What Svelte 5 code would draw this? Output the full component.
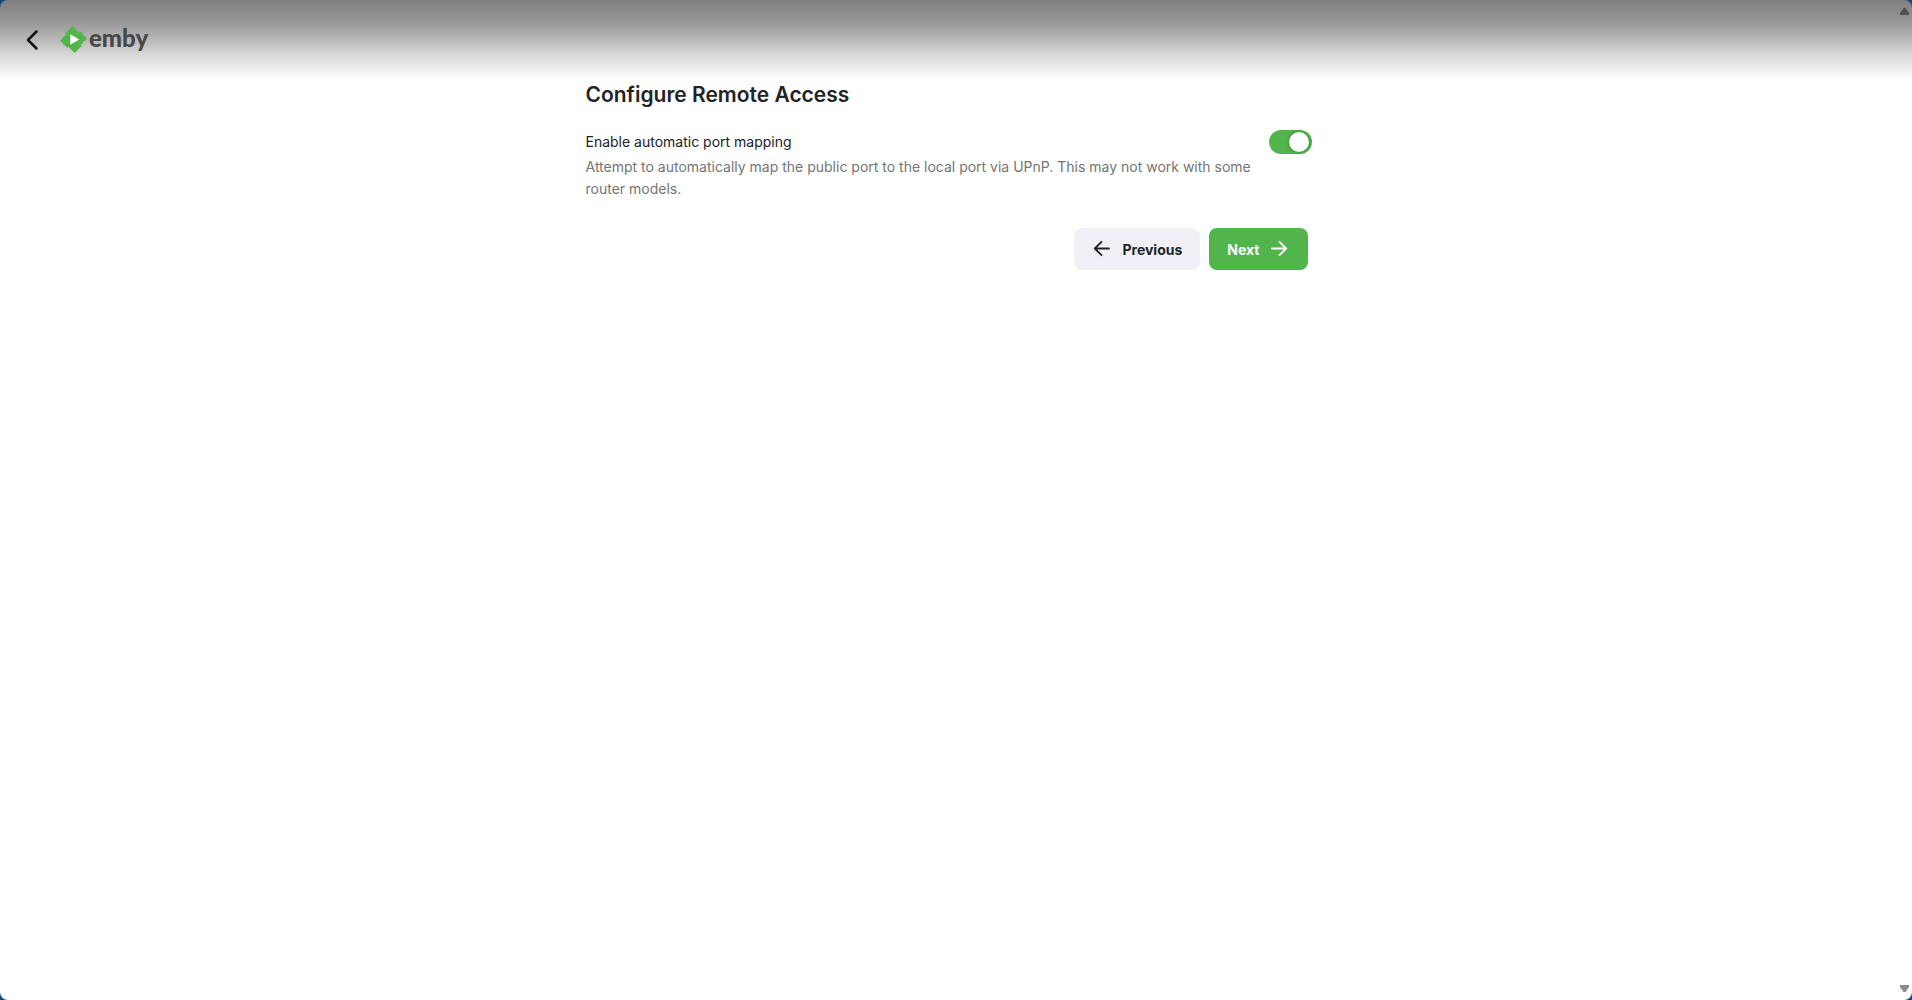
<script>
  let mapping = $state(true);
</script>

<div class="window">
  <header>
    <button class="back" aria-label="Back">
      <svg width="24" height="24" viewBox="0 0 24 24" fill="none" stroke="currentColor" stroke-width="2.5" stroke-linecap="round" stroke-linejoin="round">
        <path d="M16.500 3.500 8 12l8.500 8.500" />
      </svg>
    </button>
    <a class="logo" href="#home">
      <svg width="27" height="27" viewBox="0 0 24 24">
        <path fill="#fff" d="M8 6h10v12H8Z" />
        <path fill="#52b54b" d="M11.041 0c-.007 0-1.456 1.430-3.219 3.176L4.615 6.352l.512.513.512.512-2.819 2.791L0 12.961l1.830 1.848c1.006 1.016 2.438 2.460 3.182 3.209l1.351 1.359.508-.496c.280-.273.515-.498.524-.498.008 0 1.266 1.264 2.794 2.808L12.970 24l.187-.182c.230-.225 5.007-4.950 5.717-5.656l.520-.516-.502-.513c-.276-.282-.500-.520-.496-.530.003-.009 1.264-1.260 2.802-2.783 1.538-1.522 2.800-2.776 2.803-2.785.005-.012-3.617-3.684-6.107-6.193L17.650 4.600l-.505.505c-.279.278-.517.501-.530.497-.013-.005-1.270-1.267-2.793-2.805A449.655 449.655 0 0 0 11.041 0zM9.223 7.367c.091.038 7.951 4.608 7.957 4.627.003.013-1.781 1.056-3.965 2.320a999.898 999.898 0 0 1-3.996 2.307c-.019.006-.026-1.266-.026-4.629 0-3.700.007-4.634.030-4.625Z" />
      </svg>
      <span>emby</span>
    </a>
  </header>

  <main>
    <form>
      <h1>Configure Remote Access</h1>
      <div class="setting">
        <div class="copy">
          <label for="mapping">Enable automatic port mapping</label>
          <p id="mapping-help">Attempt to automatically map the public port to the local port via UPnP. This may not work with some router models.</p>
        </div>
        <input id="mapping" type="checkbox" role="switch" aria-describedby="mapping-help" bind:checked={mapping} />
      </div>
      <div class="actions">
        <button type="button" class="previous">
          <svg width="20" height="20" viewBox="0 0 20 20" fill="none" stroke="currentColor" stroke-width="1.800" stroke-linecap="round" stroke-linejoin="round">
            <path d="M17 9.500H3M9.500 2.800 2.800 9.500l6.700 6.700" />
          </svg>
          Previous
        </button>
        <button type="button" class="next">
          Next
          <svg width="20" height="20" viewBox="0 0 20 20" fill="none" stroke="currentColor" stroke-width="1.800" stroke-linecap="round" stroke-linejoin="round">
            <path d="M2 9.500h14M9.500 2.800 16.200 9.500l-6.700 6.700" />
          </svg>
        </button>
      </div>
    </form>
  </main>

  <div class="scrollbar" aria-hidden="true">
    <svg width="9" height="7" viewBox="0 0 9 7"><path fill="#505050" d="M3.500 0h2L9 5v2H0V5Z" /></svg>
    <svg width="9" height="7" viewBox="0 0 9 7"><path fill="#8b8b8b" d="M0 0h9v2L5.500 7h-2L0 2Z" /></svg>
  </div>
</div>

<style>
  :global(body) {
    margin: 0;
    background: #0f4c81;
  }

  .window {
    position: relative;
    box-sizing: border-box;
    min-height: 100vh;
    padding-right: 15px;
    border-radius: 8px;
    background: linear-gradient(#808080 0, #949494 20px, #b5b5b5 38px, #d6d6d6 54px, #efefef 69px, #fff 80px);
    background-color: #fff;
    font-family: Inter, "Liberation Sans", sans-serif;
    font-size: 14px;
    color: #222326;
  }

  header {
    display: flex;
    align-items: center;
    gap: 16px;
    height: 80px;
    padding-left: 20px;
  }

  button {
    border: 0;
    font: inherit;
    color: inherit;
    cursor: pointer;
  }

  .back {
    display: flex;
    padding: 0;
    background: none;
    color: #111;
  }

  .logo {
    display: flex;
    align-items: center;
    gap: 2px;
    padding-bottom: 2px;
    color: #484848;
    font-family: Lato, sans-serif;
    font-size: 24px;
    font-weight: 900;
    line-height: 26px;
    text-decoration: none;
  }

  .logo span {
    padding-bottom: 2px;
  }

  form {
    box-sizing: border-box;
    width: 100%;
    max-width: 726px;
    margin: 0 auto;
  }

  h1 {
    margin: 0;
    font-size: 21px;
    font-weight: 600;
    line-height: 30px;
  }

  .setting {
    display: flex;
    align-items: flex-start;
    margin-top: 20px;
  }

  .copy {
    flex: 1;
    min-width: 0;
  }

  label {
    display: block;
    line-height: 24px;
  }

  p {
    margin: 2px 0 0;
    line-height: 22px;
    color: #757575;
  }

  input {
    flex: none;
    display: flex;
    align-items: center;
    justify-content: flex-end;
    box-sizing: border-box;
    width: 43px;
    height: 24px;
    margin: 0;
    padding: 0 3px;
    border-radius: 12px;
    background: #52b54b;
    appearance: none;
    cursor: pointer;
  }

  input:not(:checked) {
    justify-content: flex-start;
    background: #bbb;
  }

  input::before {
    content: "";
    width: 20px;
    height: 20px;
    border-radius: 50%;
    background: #fff;
    box-shadow: 0 0 4px rgba(0, 0, 0, 0.3);
  }

  .actions {
    display: flex;
    justify-content: flex-end;
    gap: 9px;
    margin: 28px 4px 0 0;
  }

  .actions button {
    display: flex;
    align-items: center;
    gap: 10px;
    height: 42px;
    padding: 0 18px;
    border-radius: 8px;
    font-weight: 700;
  }

  .actions .previous {
    background: #f1f0f6;
  }

  .actions .next {
    background: #52b54b;
    color: #fff;
  }

  .scrollbar {
    position: absolute;
    inset: 8px 3px 8px auto;
    display: flex;
    flex-direction: column;
    justify-content: space-between;
  }
</style>
